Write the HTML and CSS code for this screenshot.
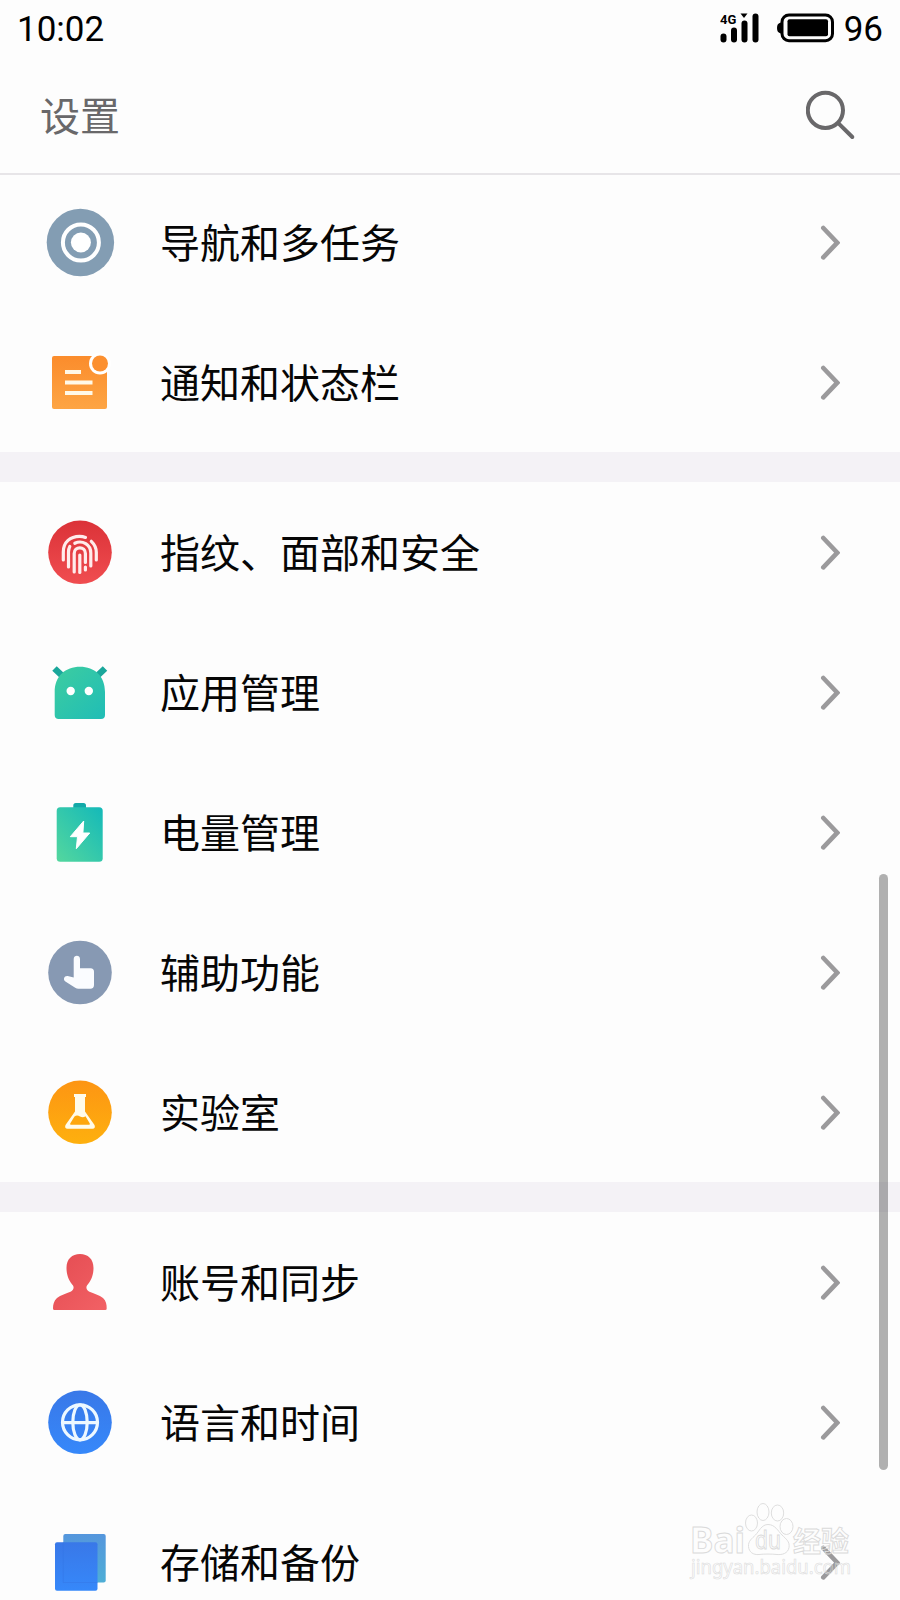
FILE: index.html
```html
<!DOCTYPE html>
<html lang="zh-CN">
<head>
<meta charset="utf-8">
<title>设置</title>
<link rel="stylesheet" href="styles.css">
</head>
<body>
<svg class="defs" width="0" height="0" aria-hidden="true">
  <defs>
    <linearGradient id="orange" x1="0" y1="0" x2="0" y2="1"><stop offset="0" stop-color="#fb8c2c"/><stop offset="1" stop-color="#fda544"/></linearGradient>
    <linearGradient id="red" x1="0" y1="0" x2="0" y2="1"><stop offset="0" stop-color="#db3238"/><stop offset="1" stop-color="#f04d50"/></linearGradient>
    <linearGradient id="green" x1="0" y1="0" x2="1" y2="1"><stop offset="0" stop-color="#3dcda0"/><stop offset="1" stop-color="#20bdb6"/></linearGradient>
    <linearGradient id="power" x1="1" y1="0" x2="0" y2="1"><stop offset="0" stop-color="#14b9b9"/><stop offset="1" stop-color="#54d79e"/></linearGradient>
    <linearGradient id="amber" x1="0" y1="0" x2="0" y2="1"><stop offset="0" stop-color="#fd9513"/><stop offset="1" stop-color="#feb00e"/></linearGradient>
    <linearGradient id="rose" x1="0" y1="0" x2="1" y2="1"><stop offset="0" stop-color="#e44c52"/><stop offset="1" stop-color="#f26165"/></linearGradient>
    <linearGradient id="blue" x1="0" y1="0" x2="0" y2="1"><stop offset="0" stop-color="#3978e8"/><stop offset="1" stop-color="#3688fa"/></linearGradient>
    <linearGradient id="cyan" x1="0" y1="0" x2="0" y2="1"><stop offset="0" stop-color="#5596dd"/><stop offset="1" stop-color="#4eaed6"/></linearGradient>
    <symbol id="chevron" viewBox="0 0 20 36"><path d="M3.300 4 17.300 18.700 3.300 33.400" fill="none" stroke="#9b9a9c" stroke-width="4.600" stroke-linecap="round"/></symbol>
  </defs>
</svg>
<div class="screen">
  <header class="top">
    <div class="status">
      <span class="time">10:02</span>
      <svg class="signal" width="40" height="32" viewBox="0 0 40 32">
        <text x="0" y="12.500" class="net">4G</text>
        <path d="M20.500 2.500h7l-3.500 4.500z"/>
        <rect x="0.500" y="22.500" width="6" height="9" rx="3"/>
        <rect x="11" y="16.500" width="6" height="15" rx="3"/>
        <rect x="21.500" y="9.500" width="6" height="22" rx="3"/>
        <rect x="32.500" y="2.500" width="6" height="29" rx="3"/>
      </svg>
      <svg class="battery" width="58" height="32" viewBox="0 0 58 32">
        <path d="M5 11.500C2 12 1 14 1 17s1 5 4 5.500z"/>
        <rect x="6" y="4" width="50.500" height="25.700" rx="7" fill="none" stroke="#000" stroke-width="3"/>
        <rect x="11.500" y="8.300" width="40.500" height="17" rx="2"/>
      </svg>
      <span class="level">96</span>
    </div>
    <div class="titlebar">
      <h1 class="title">设置</h1>
      <svg class="search" width="50" height="50" viewBox="0 0 50 50" fill="none" stroke="#69686a" stroke-width="4" stroke-linecap="round"><circle cx="19.400" cy="20.300" r="17.600"/><path d="M32.500 33.300 46.300 47"/></svg>
    </div>
  </header>
  <main>
    <section class="group">
      <div class="row">
        <svg class="icon" viewBox="0 0 80 80"><circle cx="40.400" cy="40.500" r="33.700" fill="#839db3"/><circle cx="40.900" cy="40.500" r="18" fill="none" stroke="#fff" stroke-width="4"/><circle cx="40.900" cy="40.500" r="10" fill="#fff"/></svg>
        <span class="label">导航和多任务</span><svg class="chevron"><use href="#chevron"/></svg>
      </div>
      <div class="row">
        <svg class="icon" viewBox="0 0 80 80"><rect x="12" y="14" width="55" height="53" rx="2" fill="url(#orange)"/><circle cx="60" cy="21.500" r="11" fill="#fff"/><circle cx="60" cy="21.500" r="8" fill="#fc9030"/><path d="M25 30h16M25 40.500h27.500M25 51h27.500" stroke="#fff9e8" stroke-width="4"/></svg>
        <span class="label">通知和状态栏</span><svg class="chevron"><use href="#chevron"/></svg>
      </div>
    </section>
    <section class="group">
      <div class="row">
        <svg class="icon" viewBox="0 0 80 80"><circle cx="40" cy="40.300" r="31.800" fill="url(#red)"/><g fill="none" stroke="#ffecec" stroke-width="3.200" stroke-linecap="round"><path d="M23.300 48V40C23.300 30 30.500 24.300 39.500 24.300c2.300 0 4.300.4 6 1.100"/><path d="M51.300 29.300c3.200 3 5 6.500 5 11V48"/><path d="M29.800 34.500c-.9 1.700-1.300 3.500-1.300 5.500v15"/><path d="M34.800 31.300C42.500 27.500 50.800 33 50.800 41V54M45.400 55v3"/><path d="M34.200 60V41.500c0-7.500 11.200-7.500 11.200 0v9"/><path d="M39.800 43v17.500"/></g></svg>
        <span class="label">指纹、面部和安全</span><svg class="chevron"><use href="#chevron"/></svg>
      </div>
      <div class="row">
        <svg class="icon" viewBox="0 0 80 80"><path d="M14.500 16.500l8.500 8M65 16.500l-8.500 8" stroke="#1aa79b" stroke-width="6.500"/><path d="M14.700 40C14.700 24 25.500 14.700 40 14.700S65 24 65 40v23q0 4-4 4H18.700q-4 0-4-4z" fill="url(#green)"/><circle cx="30.700" cy="39" r="4.200" fill="#fff"/><circle cx="48.800" cy="39" r="4.200" fill="#fff"/></svg>
        <span class="label">应用管理</span><svg class="chevron"><use href="#chevron"/></svg>
      </div>
      <div class="row">
        <svg class="icon" viewBox="0 0 80 80"><path d="M33.300 16v-2.500q0-2.500 2.500-2.500h7.700q2.500 0 2.500 2.500V16z" fill="#13a9a8"/><rect x="16.700" y="15.300" width="46" height="54.400" rx="3.500" fill="url(#power)"/><path d="M43.700 29 30.300 44.700h7.200L36.300 56.700 49.700 41h-6.800z" fill="#fff" stroke="#fff" stroke-width="1" stroke-linejoin="round"/></svg>
        <span class="label">电量管理</span><svg class="chevron"><use href="#chevron"/></svg>
      </div>
      <div class="row">
        <svg class="icon" viewBox="0 0 80 80"><circle cx="40" cy="40.500" r="31.800" fill="#8799b3"/><path d="M33.700 27c0-4.200 6.300-4.200 6.300 0v9.200h10.500q3.500 0 3.500 3.500v13.300q0 3.700-3.700 3.700H38.500q-1.800 0-3.300-1L25.400 49.500c-2.900-2-1-6 2.300-5.400l6 1.400z" fill="#fafcff"/></svg>
        <span class="label">辅助功能</span><svg class="chevron"><use href="#chevron"/></svg>
      </div>
      <div class="row">
        <svg class="icon" viewBox="0 0 80 80"><circle cx="40" cy="40.300" r="31.800" fill="url(#amber)"/><path d="M34 22h12v3h-1v14.500l9.500 13.500q1.300 3.700-2 3.700h-25q-3.300 0-2-3.700L35 39.500V25h-1z" fill="#fffbea"/><path d="M34.500 44.500q2.500-1.800 5.500 0t5.500-.3l4.300 7.300q.4 1.200-.8 1.200H31q-1.200 0-.8-1.200z" fill="#fea70d"/></svg>
        <span class="label">实验室</span><svg class="chevron"><use href="#chevron"/></svg>
      </div>
    </section>
    <section class="group">
      <div class="row">
        <svg class="icon" viewBox="0 0 80 80"><path d="M40 12c8 0 13.500 5 13.500 14 0 8-3 13.500-6.500 17.500-1.500 2.500 0 5 2.500 6.200 4 1.800 10 3.200 13.500 6.300 3.200 3 3.700 6.500 3.700 10.500q0 1.500-1.500 1.500H14.500q-1.500 0-1.500-1.500c0-4 .8-7.500 4-10.500 3.500-3.100 9.500-4.500 13.500-6.300 2.500-1.200 4-3.700 2.500-6.200C29.500 39.500 26.500 34 26.500 26 26.500 17 32 12 40 12z" fill="url(#rose)"/></svg>
        <span class="label">账号和同步</span><svg class="chevron"><use href="#chevron"/></svg>
      </div>
      <div class="row">
        <svg class="icon" viewBox="0 0 80 80"><circle cx="40" cy="40.300" r="31.800" fill="url(#blue)"/><g fill="none" stroke="#edf8ff" stroke-width="3.200"><circle cx="40" cy="40.300" r="17.500"/><ellipse cx="40" cy="40.300" rx="7.200" ry="17.500"/><path d="M22 40.600h36"/></g></svg>
        <span class="label">语言和时间</span><svg class="chevron"><use href="#chevron"/></svg>
      </div>
      <div class="row">
        <svg class="icon" viewBox="0 0 80 80"><rect x="23.300" y="12" width="42.400" height="48.500" rx="2" fill="url(#cyan)"/><rect x="15" y="20.300" width="42.500" height="48.500" rx="2" fill="url(#blue)"/><path d="M23.300 20.300v40.200h34.200" fill="none" stroke="#3475e6" stroke-width="1" opacity=".5"/></svg>
        <span class="label">存储和备份</span><svg class="chevron"><use href="#chevron"/></svg>
      </div>
    </section>
  </main>
  <div class="scrollbar"></div>
  <svg class="watermark" width="170" height="84" viewBox="0 0 170 84">
    <g class="outline">
      <text x="0" y="53" class="wm-brand" textLength="55" lengthAdjust="spacingAndGlyphs">Bai</text>
      <ellipse cx="61.500" cy="23" rx="6" ry="8"/><ellipse cx="73" cy="12" rx="6" ry="8.500"/><ellipse cx="87.500" cy="13" rx="6.200" ry="8"/><ellipse cx="96.500" cy="26.500" rx="6.500" ry="8"/>
      <path d="M78 24.500c7 0 10 6.500 14 10.500s8 6.500 7 12.500c-1 6-7 7.500-12 7-5-.6-13-.6-18 0-6 .6-10-2.500-10.500-8-.4-5.500 3.500-8 7-11.500s6-10.500 12.500-10.500z"/>
      <text x="65" y="49" class="wm-du" textLength="26" lengthAdjust="spacingAndGlyphs">du</text>
      <text x="103" y="52" class="wm-cn">经验</text>
      <text x="1" y="74" class="wm-url" textLength="160" lengthAdjust="spacingAndGlyphs">jingyan.baidu.com</text>
    </g>
  </svg>
</div>
</body>
</html>
```
FILE: styles.css
```css
* { box-sizing: border-box; }
body { margin: 0; background: #fdfdfd; }
.defs { position: absolute; }
.screen {
  position: relative;
  width: 900px;
  height: 1600px;
  overflow: hidden;
  background: #fdfdfd;
  color: #060606;
  font-family: Roboto, "Noto Sans CJK SC", sans-serif;
}
.top { height: 175px; border-bottom: 2px solid #e7e5e8; }
.status {
  display: flex;
  align-items: center;
  height: 56px;
  padding: 0 17px 0 17px;
  font-size: 35px;
  line-height: 50px;
  color: #000;
}
.time { margin-right: auto; padding-top: 3px; }
.level { padding-top: 3px; }
.signal { margin-right: 16px; margin-top: -3px; }
.net { font: bold 13px Roboto, sans-serif; }
.battery { margin-right: 10px; margin-top: -3px; }
.titlebar {
  display: flex;
  align-items: center;
  justify-content: space-between;
  height: 118px;
  padding: 0 44px 0 40px;
}
.title {
  margin: 0;
  padding-top: 5px;
  font-size: 40px;
  font-weight: 400;
  line-height: 60px;
  color: #69686a;
}
.group + .group { border-top: 30px solid #f4f2f6; }
.group:first-child { margin-top: -3px; }
.row {
  display: flex;
  align-items: center;
  height: 140px;
  padding: 0 60px 0 40px;
}
.icon { width: 80px; height: 80px; margin-right: 40px; }
.label {
  flex: 1;
  padding-top: 5px;
  font-size: 40px;
  line-height: 60px;
  white-space: nowrap;
}
.chevron { width: 20px; height: 36px; }
.scrollbar {
  position: absolute;
  top: 874px;
  left: 879px;
  width: 9px;
  height: 596px;
  border-radius: 5px;
  background: rgba(0, 0, 0, .3);
}
.watermark { position: absolute; left: 690px; top: 1500px; overflow: visible; }
.outline { fill: none; stroke: #dadada; stroke-width: .9; }
.wm-brand { font: bold 36px "Noto Sans", sans-serif; }
.wm-du { font: 25px "Noto Sans", sans-serif; }
.wm-cn { font: bold 28px "Noto Sans CJK SC", sans-serif; }
.wm-url { font: 20px "Noto Sans", sans-serif; stroke-width: .6; }
```
